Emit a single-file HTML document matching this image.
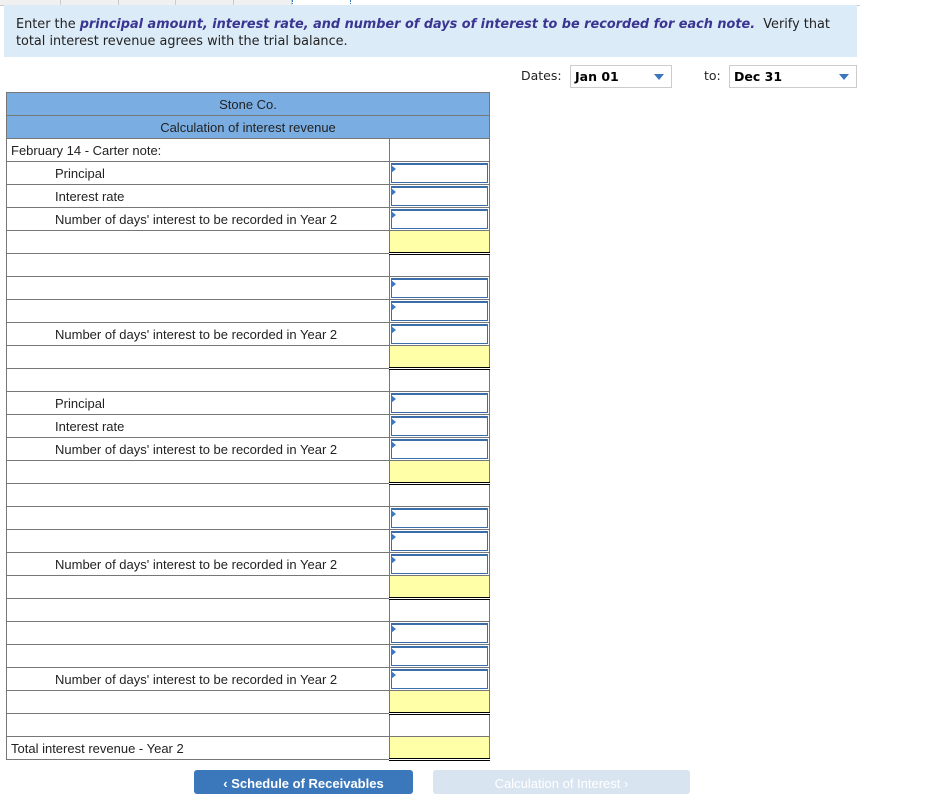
<!DOCTYPE html>
<html><head><style>
body{margin:0;width:946px;height:788px;overflow:hidden;background:#fff;font-family:"Liberation Sans",Arial,sans-serif;position:relative}
.abs{position:absolute}
.tabs{top:0;left:0;height:5px;width:860px;border-bottom:1px solid #ccc}
.tab{position:absolute;top:0;height:5px;background:#f0f0f0;border-right:1px solid #ccc}
.instr{top:5px;left:4px;width:853px;height:52px;background:#dcebf8;font-family:"DejaVu Sans",Verdana,sans-serif;font-size:12.85px;color:#222;box-sizing:border-box;padding:11px 0 0 12px;line-height:17px}
.instr b{color:#3a3591;font-style:italic}
.dates{font-family:"DejaVu Sans",Verdana,sans-serif;font-size:12.5px;color:#222}
.sel{position:absolute;height:23px;border:1px solid #ccc;box-sizing:border-box;font-weight:bold;font-size:12.5px;padding:3px 0 0 4px;background:#fff;font-family:"DejaVu Sans",Verdana,sans-serif}
.sel:after{content:"";position:absolute;right:7px;top:8px;border:5px solid transparent;border-top:6px solid #3a77be;border-bottom:0}
table{position:absolute;left:6px;top:92px;border-collapse:collapse;font-size:13px;color:#222}
td{border:1px solid #777;height:23px;padding:0;box-sizing:border-box}
td.l{width:383px;padding-left:4px}
td.r{width:100px;position:relative}
.hd td{background:#7aaee3;text-align:center}
.in{position:absolute;left:1px;top:1px;right:1px;bottom:1px;border:1px solid #3b6ea8;border-top:2px solid #3b6ea8}
.in:before{content:"";position:absolute;left:-1px;top:0;border:4px solid transparent;border-left:5px solid #3b78c6;border-right:0}
td.y{background:#ffffa8;border-bottom:3px double #000}
.ind{padding-left:48px!important}
.btn{top:770px;height:18px;border-radius:3px}
</style></head><body>
<div class="abs tabs">
<div class="tab" style="left:0;width:60px"></div><div class="tab" style="left:61px;width:57px"></div><div class="tab" style="left:119px;width:56px"></div><div class="tab" style="left:176px;width:57px"></div><div class="tab" style="left:234px;width:57px"></div>
<div class="tab" style="left:292px;width:57px;background:#fff;border:1px dotted #3a77be;border-top:0"></div>
</div>
<div class="abs instr">Enter the <b>principal amount, interest rate, and number of days of interest to be recorded for each note.</b>&nbsp; Verify that total interest revenue agrees with the trial balance.</div>
<div class="abs dates" style="left:521px;top:68px">Dates:</div>
<div class="sel" style="left:570px;top:65px;width:102px">Jan 01</div>
<div class="abs dates" style="left:704px;top:68px">to:</div>
<div class="sel" style="left:729px;top:65px;width:128px">Dec 31</div>
<table>
<tr class="hd"><td colspan="2">Stone Co.</td></tr>
<tr class="hd"><td colspan="2">Calculation of interest revenue</td></tr>
<tr><td class="l">February 14 - Carter note:</td><td class="r"></td></tr>
<tr><td class="l ind">Principal</td><td class="r"><div class="in"></div></td></tr>
<tr><td class="l ind">Interest rate</td><td class="r"><div class="in"></div></td></tr>
<tr><td class="l ind">Number of days' interest to be recorded in Year 2</td><td class="r"><div class="in"></div></td></tr>
<tr><td class="l"></td><td class="r y"></td></tr>
<tr><td class="l"></td><td class="r"></td></tr>
<tr><td class="l"></td><td class="r"><div class="in"></div></td></tr>
<tr><td class="l"></td><td class="r"><div class="in"></div></td></tr>
<tr><td class="l ind">Number of days' interest to be recorded in Year 2</td><td class="r"><div class="in"></div></td></tr>
<tr><td class="l"></td><td class="r y"></td></tr>
<tr><td class="l"></td><td class="r"></td></tr>
<tr><td class="l ind">Principal</td><td class="r"><div class="in"></div></td></tr>
<tr><td class="l ind">Interest rate</td><td class="r"><div class="in"></div></td></tr>
<tr><td class="l ind">Number of days' interest to be recorded in Year 2</td><td class="r"><div class="in"></div></td></tr>
<tr><td class="l"></td><td class="r y"></td></tr>
<tr><td class="l"></td><td class="r"></td></tr>
<tr><td class="l"></td><td class="r"><div class="in"></div></td></tr>
<tr><td class="l"></td><td class="r"><div class="in"></div></td></tr>
<tr><td class="l ind">Number of days' interest to be recorded in Year 2</td><td class="r"><div class="in"></div></td></tr>
<tr><td class="l"></td><td class="r y"></td></tr>
<tr><td class="l"></td><td class="r"></td></tr>
<tr><td class="l"></td><td class="r"><div class="in"></div></td></tr>
<tr><td class="l"></td><td class="r"><div class="in"></div></td></tr>
<tr><td class="l ind">Number of days' interest to be recorded in Year 2</td><td class="r"><div class="in"></div></td></tr>
<tr><td class="l"></td><td class="r y"></td></tr>
<tr><td class="l"></td><td class="r"></td></tr>
<tr><td class="l">Total interest revenue - Year 2</td><td class="r y"></td></tr>
</table>
<div class="abs btn" style="left:194px;width:219px;background:#3b78bb;color:#fff;font-size:13px;font-weight:bold;text-align:center;padding-top:6px;box-sizing:border-box;height:24px">‹ Schedule of Receivables</div>
<div class="abs btn" style="left:433px;width:257px;background:#d9e4f1;color:#fff;font-size:13px;text-align:center;padding-top:6px;box-sizing:border-box;height:24px">Calculation of Interest ›</div>
</body></html>
